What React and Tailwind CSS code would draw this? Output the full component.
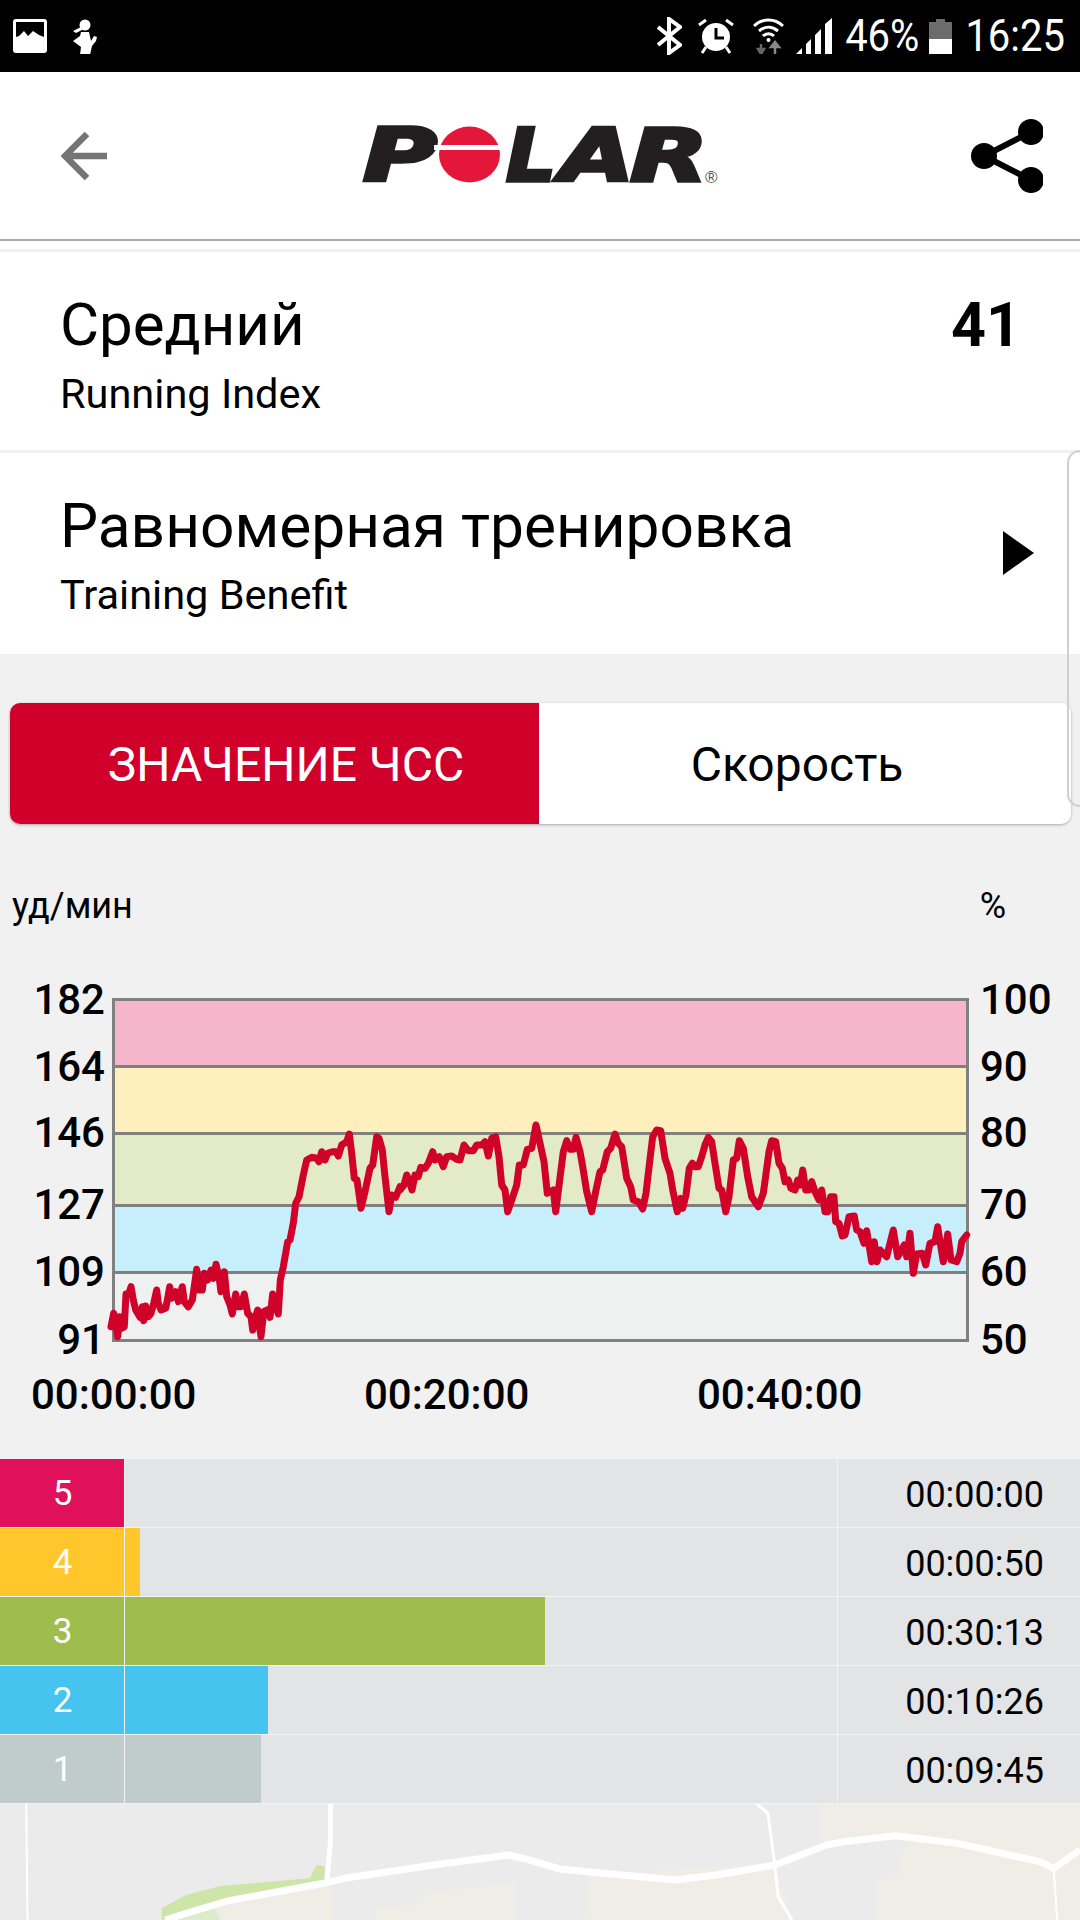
const toPath = (pts, x0, y0, sx, sy) =>
  pts.map(([x, y], i) => `${i ? 'L' : 'M'}${(x0 + x / sx).toFixed(1)} ${(y0 + y / sy).toFixed(1)}`).join(' ');

// heart rate trace, read off three crops of the chart (crop px, 3x)
const traceA = [[18,650],[26,610],[32,640],[38,680],[44,620],[50,655],[58,650],[63,552],[72,550],[78,530],[85,570],[92,600],[105,622],[112,590],[116,632],[122,588],[130,620],[138,610],[146,580],[155,540],[160,580],[168,600],[182,595],[188,565],[194,530],[200,565],[212,545],[220,575],[232,530],[238,575],[250,590],[262,570],[275,478],[282,540],[292,540],[298,490],[308,510],[318,480],[325,505],[333,463],[342,500],[348,545],[358,485],[365,560],[375,585],[382,612],[392,552],[400,590],[408,590],[418,552],[428,610],[438,620],[443,660],[450,625],[458,600],[462,640],[468,680],[476,605],[486,600],[495,622],[503,552],[512,590],[520,612],[526,510],[535,470],[548,395],[555,390],[565,340],[572,280],[582,260],[595,195],[605,150],[620,142],[635,145],[642,155],[650,125],[660,150],[668,130],[682,125],[692,125],[700,138],[710,105],[725,95],[733,72],[740,130],[748,205],[756,210],[768,295],[780,245],[795,175],[803,165],[815,80],[822,85],[832,120],[840,200],[852,305],[860,255],[872,262],[885,230]];
const traceB = [[0,240],[12,225],[20,195],[28,212],[36,240],[45,195],[55,200],[62,172],[75,175],[85,160],[98,125],[105,150],[118,140],[130,170],[140,140],[155,138],[170,148],[180,150],[192,105],[205,122],[220,122],[230,105],[245,105],[255,95],[265,138],[275,85],[287,80],[297,140],[305,225],[315,240],[323,305],[335,270],[350,225],[358,165],[370,165],[382,118],[395,115],[408,45],[418,90],[432,155],[442,250],[460,240],[467,305],[478,220],[490,125],[500,92],[510,118],[520,118],[528,82],[540,125],[548,170],[560,245],[575,305],[588,240],[600,185],[608,180],[622,125],[632,115],[645,72],[655,100],[665,110],[680,205],[692,230],[700,270],[715,275],[728,297],[738,250],[745,190],[758,80],[770,60],[782,62],[795,145],[810,190],[818,240],[832,305],[842,265],[848,295],[858,255],[868,175]];
const traceC = [[-8,160],[0,170],[10,170],[20,140],[30,105],[40,82],[50,95],[60,160],[72,235],[80,240],[92,305],[102,260],[115,150],[125,145],[133,92],[145,115],[158,200],[170,260],[190,290],[205,250],[222,125],[230,92],[242,95],[252,160],[262,175],[270,215],[280,210],[288,235],[300,240],[308,210],[316,225],[323,180],[332,240],[342,240],[350,215],[360,245],[372,270],[380,240],[390,305],[398,305],[407,260],[417,260],[422,335],[432,340],[442,378],[450,375],[462,320],[478,318],[485,360],[495,365],[507,400],[515,362],[530,455],[538,395],[546,455],[555,420],[575,440],[595,360],[608,440],[628,405],[635,440],[645,370],[655,490],[665,432],[682,430],[692,465],[705,400],[720,395],[728,350],[735,395],[745,455],[758,372],[768,450],[785,455],[795,430],[800,395],[815,375]];

const tracePath = [
  toPath(traceA, 105 - 112, 1110 - 998, 3, 3),
  toPath(traceB, 400 - 112, 1110 - 998, 3, 3).replace('M', 'L'),
  toPath(traceC, 695 - 112, 1110 - 998, 3, 3).replace('M', 'L'),
].join(' ');

const leftLabels = [
  { t: '182', c: 'mb-[17px]' },
  { t: '164', c: 'mb-[16px]' },
  { t: '146', c: 'mb-[22px]' },
  { t: '127', c: 'mb-[17px]' },
  { t: '109', c: 'mb-[18px]' },
  { t: '91', c: '' },
];
const rightLabels = ['100', '90', '80', '70', '60', '50'];

const bands = [
  'h-[67px] bg-[#f5b5cb]',
  'h-[67px] bg-[#feefbd]',
  'h-[72px] bg-[#e2ebc6]',
  'h-[67px] bg-[#c7eefb]',
  'h-[68px] bg-[#eff0f0]',
];

const zones = [
  { n: 5, color: 'bg-[#e0115a]', bar: 'w-0', time: '00:00:00' },
  { n: 4, color: 'bg-[#ffc72c]', bar: 'w-[15px]', time: '00:00:50' },
  { n: 3, color: 'bg-[#9ebd4c]', bar: 'w-[420px]', time: '00:30:13' },
  { n: 2, color: 'bg-[#46c4ef]', bar: 'w-[143px]', time: '00:10:26' },
  { n: 1, color: 'bg-[#c0cbcb]', bar: 'w-[136px]', time: '00:09:45' },
];

// map crop px: x scale 1.452, y scale 3, crop starts at y 1800, map at 1804
const mp = (pts) => toPath(pts, 0, -4, 1.452, 3);
const mainRoad = [[240,360],[270,340],[330,303],[470,250],[500,235],[630,195],[738,165],[765,178],[815,208],[980,240],[1040,225],[1125,195],[1200,135],[1225,125],[1300,107],[1390,130],[1510,185],[1530,205],[1568,150]];

function ImageIcon() {
  return (
    <svg width="34" height="34" viewBox="0 0 34 34">
      <rect width="34" height="34" rx="3" fill="#fff" />
      <path d="M3 3h28v15l-5-2-6-4-5 5-4-5-5 5-3 1z" fill="#000" />
    </svg>
  );
}

function RunnerIcon() {
  return (
    <svg width="28" height="36" viewBox="0 0 28 36" fill="#fff" className="ml-[23px]">
      <circle cx="15" cy="7" r="5.5" />
      <path d="M11 9 3 13l3 2 6-3z" />
      <path d="M11 14h8l2 9 3-5 3 1-1 4-4 5-2 9H10l1-8-8-6 7-5z" />
    </svg>
  );
}

function Bluetooth() {
  return (
    <svg width="25" height="38" viewBox="0 0 25 38" fill="none" stroke="#fff" strokeWidth="4">
      <path d="M1 10 23 28 12 36V2l11 8L1 28" />
    </svg>
  );
}

function Alarm() {
  return (
    <svg width="36" height="35" viewBox="0 0 36 35" className="ml-[16px]">
      <path d="M1 6 8 1M35 6 28 1M8 28l-4 6M28 28l4 6" stroke="#fff" strokeWidth="3" />
      <circle cx="18" cy="18" r="14" fill="#fff" />
      <path d="M18 9v10h8" fill="none" stroke="#000" strokeWidth="3" />
    </svg>
  );
}

function Wifi() {
  return (
    <svg width="31" height="36" viewBox="0 0 31 36" fill="none" className="ml-[19px]">
      <path d="M1 8C9 0 22 0 30 8M6 13c6-5 13-5 19 0M10 18c3-3 8-3 11 0" stroke="#fff" strokeWidth="3" />
      <circle cx="15.5" cy="22" r="2" fill="#fff" />
      <path d="M8 26v10M5 31l3 5 3-5z" stroke="#666" strokeWidth="2.5" fill="#666" />
      <path d="M22 36V24M18 29l4-5 4 5z" stroke="#888" strokeWidth="2.5" fill="#888" />
    </svg>
  );
}

function Signal() {
  return (
    <svg width="36" height="36" viewBox="0 0 36 36" fill="#fff" className="ml-[12px]">
      <path d="M0 36 6 30v6zM10 36V26l5-5v15zM19 36V17l6-6v25zM29 36V6l7-6v36z" />
    </svg>
  );
}

function Battery() {
  return (
    <svg width="23" height="35" viewBox="0 0 23 35" className="ml-[10px]">
      <path d="M7 0h9v3h7v17H0V3h7z" fill="#6c6c6c" />
      <rect y="20" width="23" height="15" fill="#fff" />
    </svg>
  );
}

function PolarLogo() {
  const letter = {
    fontFamily: '"DejaVu Sans", sans-serif',
    fontWeight: 700,
    fontStyle: 'italic',
    fontSize: 73,
    fill: '#231f20',
    stroke: '#231f20',
    strokeWidth: 3.5,
    lengthAdjust: 'spacingAndGlyphs',
  };
  return (
    <svg width="360" height="62" viewBox="0 0 360 62" className="ml-[255px] shrink-0 overflow-visible">
      <text x="1" y="56" textLength="74" {...letter}>P</text>
      <ellipse cx="107.5" cy="29.5" rx="30.5" ry="28" fill="#e4173a" />
      <rect x="72" y="20" width="70" height="5" fill="#fff" />
      <text x="144" y="56" textLength="50" {...letter}>L</text>
      <text x="198" y="56" textLength="74" {...letter}>A</text>
      <text x="268" y="56" textLength="78" {...letter}>R</text>
      <text x="343" y="58" fontSize="17" fill="#555" fontFamily='"Liberation Sans", sans-serif'>®</text>
    </svg>
  );
}

function MapStrip() {
  return (
    <div className="h-[116px] bg-[#ebebeb] overflow-hidden">
      <svg width="1080" height="116" viewBox="0 0 1080 116" fill="none">
        <path d={mp([[1192,0],[1568,0],[1568,150],[1530,205],[1510,185],[1390,130],[1300,107],[1225,125],[1192,135]]) + 'Z'} fill="#efede5" />
        <path d={mp([[1320,125],[1390,130],[1510,185],[1530,205],[1568,150],[1568,360],[1275,360],[1275,240],[1305,235],[1305,170]]) + 'Z'} fill="#efede5" />
        <path d={mp([[855,225],[1125,195],[1150,360],[850,360]]) + 'Z'} fill="#efede5" />
        <path d={mp([[545,360],[545,325],[610,315],[620,280],[745,250],[745,360]]) + 'Z'} fill="#efede5" />
        <path d={mp([[315,325],[480,255],[485,360],[320,360]]) + 'Z'} fill="#efede5" />
        <path d={mp([[250,360],[310,320],[320,360]]) + 'Z'} fill="#dcebc9" />
        <path d={mp([[235,325],[270,285],[320,258],[450,235],[460,195],[472,200],[470,248],[330,300],[235,360]]) + 'Z'} fill="#cde5a6" />
        <path d={mp([[38,0],[40,360]])} stroke="#fff" strokeWidth="2" />
        <path d={mp([[480,0],[480,120],[475,240]])} stroke="#fff" strokeWidth="5" />
        <path d={mp([[1098,10],[1115,40],[1125,195],[1130,290],[1150,360]])} stroke="#fff" strokeWidth="3" />
        <path d={mp([[1530,205],[1535,360]])} stroke="#fff" strokeWidth="2" />
        <path d={mp(mainRoad)} stroke="#fff" strokeWidth="7" strokeLinejoin="round" />
      </svg>
    </div>
  );
}

export default function App() {
  return (
    <div className="relative w-[1080px] h-[1920px] overflow-hidden bg-[#f1f1f1] text-black [font-family:Roboto,sans-serif]">
      {/* Status bar */}
      <div className="h-[72px] bg-black text-white flex items-center pl-[13px] pr-[15px]">
        <ImageIcon />
        <RunnerIcon />
        <div className="ml-auto flex items-center">
          <Bluetooth />
          <Alarm />
          <Wifi />
          <Signal />
          <span className="ml-[13px] text-[40px] leading-[40px] scale-y-[1.12] inline-block">46%</span>
          <Battery />
          <span className="ml-[13px] text-[40px] leading-[40px] scale-y-[1.12] inline-block">16:25</span>
        </div>
      </div>

      {/* Header */}
      <div className="h-[169px] bg-white border-b-2 border-[#aaaaaa] flex items-center pl-[61px]">
        <svg width="46" height="48" viewBox="0 0 46 48" fill="none" stroke="#757575" strokeWidth="6.5" className="shrink-0">
          <path d="M46 24H5M26 2 4 24l22 22" />
        </svg>
        <PolarLogo />
        <svg width="72" height="74" viewBox="0 0 72 74" className="ml-[249px] shrink-0">
          <path d="M60 13 13 37l47 24" fill="none" stroke="#000" strokeWidth="6" />
          <circle cx="60" cy="13" r="13" />
          <circle cx="13" cy="37" r="13" />
          <circle cx="60" cy="61" r="13" />
        </svg>
      </div>

      {/* Summary cards */}
      <div className="bg-white pt-[8px]">
        <div className="h-[201px] bg-white border-t-[3px] border-[#f0f0f0] flex justify-between pl-[60px] pr-[61px] pt-[38px]">
          <div>
            <div className="text-[60px] leading-[70px]">Средний</div>
            <div className="text-[41.5px] leading-[48px] mt-[10px]">Running Index</div>
          </div>
          <div className="text-[61px] leading-[70px] font-bold -mr-[2px]">41</div>
        </div>
        <div className="h-[204px] bg-white border-t-[3px] border-[#f0f0f0] flex items-start justify-between pl-[60px] pr-[46px] pt-[39px]">
          <div>
            <div className="text-[60.4px] leading-[70px]">Равномерная тренировка</div>
            <div className="text-[41.5px] leading-[48px] mt-[9px]">Training Benefit</div>
          </div>
          <div className="mt-[39px] w-0 h-0 border-y-[22px] border-y-transparent border-l-[31px] border-l-black" />
        </div>
      </div>

      {/* Tabs */}
      <div className="mt-[49px] ml-[10px] w-[1061px] h-[121px] flex rounded-[10px] shadow-[0_1px_3px_rgba(0,0,0,0.3)]">
        <div className="w-[529px] bg-[#d0002a] rounded-l-[10px] text-white text-[48px] flex items-center justify-center pl-[23px] pt-[3px]">
          ЗНАЧЕНИЕ ЧСС
        </div>
        <div className="flex-1 bg-white rounded-r-[10px] text-[48px] flex items-center justify-center pr-[16px] pt-[3px]">
          Скорость
        </div>
      </div>

      {/* Units */}
      <div className="mt-[57px] h-[50px] flex justify-between pl-[12px] pr-[74px] text-[36px] leading-[50px]">
        <span>уд/мин</span>
        <span>%</span>
      </div>

      {/* Chart */}
      <div className="mt-[67px] flex items-start h-[344px]">
        <div className="w-[112px] -mt-[23px] pr-[7px] flex flex-col items-end text-[42px] leading-[50px] font-medium">
          {leftLabels.map((l) => (
            <div key={l.t} className={l.c}>{l.t}</div>
          ))}
        </div>
        <div className="relative w-[857px] h-[344px]">
          <div className="h-full border-x-[3px] border-b-[3px] border-[#808080]">
            {bands.map((b) => (
              <div key={b} className={`${b} border-t-[3px] border-[#808080]`} />
            ))}
          </div>
          <svg width="857" height="344" className="absolute left-0 top-0 overflow-visible" fill="none">
            <path d={tracePath} stroke="#d0022a" strokeWidth="7" strokeLinejoin="round" strokeLinecap="round" />
          </svg>
        </div>
        <div className="-mt-[23px] pl-[11px] flex flex-col text-[42px] leading-[50px] font-medium">
          {rightLabels.map((t, i) => (
            <div key={t} className={leftLabels[i].c}>{t}</div>
          ))}
        </div>
      </div>

      {/* Time axis */}
      <div className="mt-[28px] h-[50px] flex gap-[170px] pl-[31px] text-[42px] leading-[50px] font-medium">
        <span className="w-[163px] text-center">00:00:00</span>
        <span className="w-[163px] text-center">00:20:00</span>
        <span className="w-[163px] text-center">00:40:00</span>
      </div>

      {/* Zones */}
      <div className="mt-[39px]">
        {zones.map((z) => (
          <div key={z.n} className="h-[69px] flex bg-[#e3e4e5] border-b border-[#f3f3f3]">
            <div className={`w-[125px] border-r border-[#f3f3f3] ${z.color} text-white text-[35px] flex items-center justify-center pt-[3px] pl-[1px]`}>
              {z.n}
            </div>
            <div className="w-[713px] border-r border-[#f3f3f3]">
              <div className={`h-full ${z.bar} ${z.color}`} />
            </div>
            <div className="flex-1 flex items-center justify-end pr-[36px] pt-[3px] text-[36px]">{z.time}</div>
          </div>
        ))}
      </div>

      <MapStrip />

      {/* Side handle */}
      <div className="absolute right-0 top-[450px] w-[13px] h-[357px] border-l-2 border-y-2 border-[#cfcfcf] rounded-l-[16px]" />
    </div>
  );
}
